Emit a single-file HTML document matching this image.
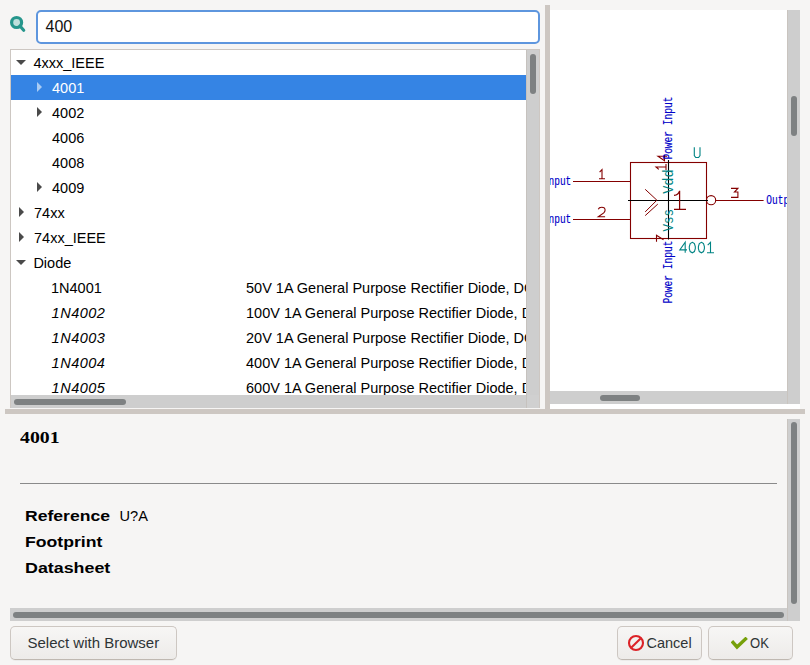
<!DOCTYPE html>
<html><head><meta charset="utf-8">
<style>
*{box-sizing:border-box;margin:0;padding:0}
html,body{width:810px;height:665px;overflow:hidden;background:#f6f5f4;font-family:"Liberation Sans",sans-serif;color:#000}
.a{position:absolute}
#search{left:36px;top:10px;width:504px;height:34px;border:2px solid #5e96de;border-radius:5px;background:#fff}
#search span{position:absolute;left:7.5px;top:6px;font-size:16px;line-height:18px;color:#111}
#tree{left:10px;top:49px;width:530px;height:359px;border:1px solid #cdc7c2;border-bottom:0;background:#fff;overflow:hidden}
.row{position:absolute;left:0;width:515px;height:25px;font-size:14.5px;line-height:25px;white-space:nowrap;letter-spacing:0}
.row.sel{background:#3584e4;color:#fff}
.row span{position:absolute;top:0.8px}
.tri{position:absolute;width:0;height:0}
.down{border-left:5px solid transparent;border-right:5px solid transparent;border-top:5px solid #4a4a4a}
.right{border-top:5px solid transparent;border-bottom:5px solid transparent;border-left:5.5px solid #4a4a4a;margin-top:-0.7px}
.it{font-style:italic;letter-spacing:0.5px}
.trough{background:#cecece}
.thumb{background:#7e8182;border-radius:3px}
.sash{background:#cdc7c2}
.btn{top:626px;height:34px;border:1px solid #cdc7c2;border-bottom-color:#bfb8b1;border-radius:5px;background:linear-gradient(#f7f6f5,#edebe9);font-size:15px;color:#2e3436;box-shadow:0 1px 0 rgba(0,0,0,0.04)}
.btn span{position:absolute;top:7px;line-height:18px}
.lbl{font-weight:bold;font-size:14px;display:inline-block;transform-origin:0 0}
</style></head><body>

<!-- search icon -->
<svg class="a" style="left:6px;top:12px" width="24" height="24" viewBox="0 0 24 24">
  <circle cx="10.6" cy="10.5" r="5" fill="#bfe0dc" stroke="#26968c" stroke-width="3.2"/>
  <line x1="14" y1="14" x2="17.7" y2="18.2" stroke="#26968c" stroke-width="3.2" stroke-linecap="round"/>
</svg>

<div id="search" class="a"><span>400</span></div>

<div id="tree" class="a">
  <div class="row" style="top:0"><div class="tri down" style="left:5.1px;top:10px"></div><span style="left:22.4px">4xxx_IEEE</span></div>
  <div class="row sel" style="top:25px"><div class="tri right" style="left:26px;top:7.5px;border-left-color:#a9cbf3"></div><span style="left:41px">4001</span></div>
  <div class="row" style="top:50px"><div class="tri right" style="left:26px;top:7.5px"></div><span style="left:41px">4002</span></div>
  <div class="row" style="top:75px"><span style="left:41px">4006</span></div>
  <div class="row" style="top:100px"><span style="left:41px">4008</span></div>
  <div class="row" style="top:125px"><div class="tri right" style="left:26px;top:7.5px"></div><span style="left:41px">4009</span></div>
  <div class="row" style="top:150px"><div class="tri right" style="left:8px;top:7.5px"></div><span style="left:23px">74xx</span></div>
  <div class="row" style="top:175px"><div class="tri right" style="left:8px;top:7.5px"></div><span style="left:23px">74xx_IEEE</span></div>
  <div class="row" style="top:200px"><div class="tri down" style="left:5.1px;top:10px"></div><span style="left:22.4px">Diode</span></div>
  <div class="row" style="top:225px"><span style="left:40px">1N4001</span><span style="left:235px">50V 1A General Purpose Rectifier Diode, DO-41</span></div>
  <div class="row" style="top:250px"><span class="it" style="left:40.6px">1N4002</span><span style="left:235px">100V 1A General Purpose Rectifier Diode, DO-41</span></div>
  <div class="row" style="top:275px"><span class="it" style="left:40.6px">1N4003</span><span style="left:235px">20V 1A General Purpose Rectifier Diode, DO-41</span></div>
  <div class="row" style="top:300px"><span class="it" style="left:40.6px">1N4004</span><span style="left:235px">400V 1A General Purpose Rectifier Diode, DO-41</span></div>
  <div class="row" style="top:325px"><span class="it" style="left:40.6px">1N4005</span><span style="left:235px">600V 1A General Purpose Rectifier Diode, DO-41</span></div>
</div>
<!-- tree scrollbars -->
<div class="a trough" style="left:526px;top:50px;width:13px;height:345px;border-left:1px solid #c6c2be"></div>
<div class="a thumb" style="left:530px;top:54px;width:6px;height:40px"></div>
<div class="a trough" style="left:11px;top:395px;width:515px;height:13px"></div>
<div class="a thumb" style="left:14px;top:399px;width:112px;height:6px"></div>
<div class="a" style="left:526px;top:395px;width:13px;height:13px;background:#d0d0d0;border-left:1px solid #c6c2be"></div>

<!-- sashes -->
<div class="a sash" style="left:545px;top:5px;width:5px;height:404px"></div>
<div class="a sash" style="left:5px;top:409px;width:800px;height:5px"></div>

<!-- preview -->
<div class="a" style="left:550px;top:10px;width:250px;height:399px;background:#fff"></div>
<div class="a trough" style="left:787px;top:10px;width:13px;height:394px;border-left:1px solid #c9c4bf"></div>
<div class="a thumb" style="left:791px;top:96px;width:6px;height:40px"></div>
<div class="a trough" style="left:550px;top:391px;width:237px;height:13px"></div>
<div class="a thumb" style="left:600px;top:395px;width:40px;height:6px"></div>

<svg class="a" style="left:550px;top:10px" width="237" height="381" viewBox="550 10 237 381">
  <g fill="none" stroke-linecap="butt">
    <rect x="630.5" y="162.5" width="76" height="76" stroke="#840000" stroke-width="1.1"/>
    <line x1="573" y1="181.5" x2="630.5" y2="181.5" stroke="#840000" stroke-width="1.1"/>
    <line x1="573" y1="219.5" x2="630.5" y2="219.5" stroke="#840000" stroke-width="1.1"/>
    <circle cx="711.1" cy="200.2" r="4.6" stroke="#840000" stroke-width="1.1"/>
    <line x1="715.7" y1="200.5" x2="763.6" y2="200.5" stroke="#840000" stroke-width="1.1"/>
    <line x1="628" y1="200.5" x2="708" y2="200.5" stroke="#000" stroke-width="1.1"/>
    <line x1="668.5" y1="160" x2="668.5" y2="239.5" stroke="#000" stroke-width="1.1"/>
    <polyline points="645.2,189.3 656.9,200.2 645.2,211.9" stroke="#840000" stroke-width="1"/>
    <line x1="657.8" y1="204.1" x2="645.2" y2="215.6" stroke="#840000" stroke-width="1"/>
<path d="M0.1,0.28 L0.5,0 L0.5,1 M0,1 L1,1" transform="translate(599,169.6) scale(6,9.1)" vector-effect="non-scaling-stroke" stroke="#840000" stroke-width="1.1" fill="none"/>
<path d="M0,0.22 Q0.1,0 0.5,0 Q1,0 1,0.3 Q1,0.45 0.8,0.6 L0,1 L1,1" transform="translate(598.3,207.2) scale(6.8,9.5)" vector-effect="non-scaling-stroke" stroke="#840000" stroke-width="1.1" fill="none"/>
<path d="M0,0 L1,0 L0.5,0.4 L1,0.4 L1,1 L0,1" transform="translate(731,188.4) scale(6.9,9)" vector-effect="non-scaling-stroke" stroke="#840000" stroke-width="1.1" fill="none"/>
<path d="M679.6,190.8 Q678.6,194.8 674,195.4 M679.6,190.8 L679.6,209.3 M674,209.3 L686,209.3" stroke="#840000" stroke-width="1.25" fill="none"/>
<path d="M0,0 L0,0.8 L0.25,1 L0.75,1 L1,0.8 L1,0" transform="translate(694.3,147.3) scale(5.7,10.2)" vector-effect="non-scaling-stroke" stroke="#008484" stroke-width="1.1" fill="none"/>
<path d="M0.75,1 L0.75,0 L0,0.72 L1,0.72" transform="translate(679.8,242.3) scale(7.2,10.5)" vector-effect="non-scaling-stroke" stroke="#008484" stroke-width="1.1" fill="none"/>
<path d="M0.5,0 L0.85,0.12 L1,0.4 L1,0.6 L0.85,0.88 L0.5,1 L0.15,0.88 L0,0.6 L0,0.4 L0.15,0.12 Z" transform="translate(689.3,242.3) scale(6,10.5)" vector-effect="non-scaling-stroke" stroke="#008484" stroke-width="1.1" fill="none"/>
<path d="M0.5,0 L0.85,0.12 L1,0.4 L1,0.6 L0.85,0.88 L0.5,1 L0.15,0.88 L0,0.6 L0,0.4 L0.15,0.12 Z" transform="translate(698.4,242.3) scale(6,10.5)" vector-effect="non-scaling-stroke" stroke="#008484" stroke-width="1.1" fill="none"/>
<path d="M0.1,0.28 L0.5,0 L0.5,1 M0,1 L1,1" transform="translate(707,242.3) scale(7,10.5)" vector-effect="non-scaling-stroke" stroke="#008484" stroke-width="1.1" fill="none"/>
<path d="M0.1,0.28 L0.5,0 L0.5,1 M0,1 L1,1" transform="translate(656,170) rotate(-90) scale(6,10)" vector-effect="non-scaling-stroke" stroke="#840000" stroke-width="1.1" fill="none"/>
<path d="M0.75,1 L0.75,0 L0,0.72 L1,0.72" transform="translate(658,160.7) rotate(-90) scale(6,9)" vector-effect="non-scaling-stroke" stroke="#840000" stroke-width="1.1" fill="none"/>
<path d="M0,0 L1,0 L0.3,1" transform="translate(656.5,241.7) rotate(-90) scale(6.5,7)" vector-effect="non-scaling-stroke" stroke="#840000" stroke-width="1.1" fill="none"/>

  </g>
  <g font-family="Liberation Mono" stroke-width="0.15">
    <text x="571.3" y="184.6" font-size="12" fill="#0000c8" stroke="#0000c8" text-anchor="end" textLength="28.5" lengthAdjust="spacingAndGlyphs">Input</text>
    <text x="571.3" y="222.6" font-size="12" fill="#0000c8" stroke="#0000c8" text-anchor="end" textLength="28.5" lengthAdjust="spacingAndGlyphs">Input</text>
    <text x="766.3" y="203.8" font-size="12" fill="#0000c8" stroke="#0000c8" textLength="34.2" lengthAdjust="spacingAndGlyphs">Output</text>
    <text transform="translate(672.2,159.6) rotate(-90)" font-size="12" fill="#0000c8" stroke="#0000c8" textLength="63" lengthAdjust="spacingAndGlyphs">Power Input</text>
    <text transform="translate(672.2,303.6) rotate(-90)" font-size="12" fill="#0000c8" stroke="#0000c8" textLength="63" lengthAdjust="spacingAndGlyphs">Power Input</text>
    <text transform="translate(673,193.8) rotate(-90)" font-size="14" fill="#008484" textLength="24.5" lengthAdjust="spacingAndGlyphs">Vdd</text>
    <text transform="translate(673,231.6) rotate(-90)" font-size="14" fill="#008484" textLength="22.5" lengthAdjust="spacingAndGlyphs">Vss</text>
  </g>
</svg>

<!-- details -->
<div class="a trough" style="left:787px;top:419px;width:13px;height:202px;border-left:1px solid #c9c4bf"></div>
<div class="a thumb" style="left:791px;top:422px;width:6px;height:182px"></div>
<div class="a trough" style="left:10px;top:608px;width:777px;height:13px"></div>
<div class="a thumb" style="left:13px;top:612px;width:771px;height:6px"></div>

<div class="a" style="left:20px;top:429px;line-height:18px"><span class="lbl" style="font-family:'Liberation Serif',serif;font-size:17px;transform:scaleX(1.165)">4001</span></div>
<div class="a" style="left:20px;top:483px;width:757px;height:1px;background:#8a8a8a"></div>
<div class="a" style="left:24.8px;top:507px;line-height:18px"><span class="lbl" style="transform:scaleX(1.255)">Reference</span></div>
<div class="a" style="left:119.5px;top:507px;line-height:18px;font-size:14.6px">U?A</div>
<div class="a" style="left:24.8px;top:533px;line-height:18px"><span class="lbl" style="transform:scaleX(1.26)">Footprint</span></div>
<div class="a" style="left:24.8px;top:559px;line-height:18px"><span class="lbl" style="transform:scaleX(1.275)">Datasheet</span></div>

<!-- buttons -->
<div class="a btn" style="left:10px;width:167px"><span style="left:16.5px">Select with Browser</span></div>
<div class="a btn" style="left:617px;width:85px">
  <svg class="a" style="left:9px;top:7px" width="18" height="18" viewBox="0 0 18 18">
    <circle cx="9" cy="9" r="7" fill="none" stroke="#dc2227" stroke-width="2.1"/>
    <line x1="13.6" y1="4.6" x2="4.4" y2="13.4" stroke="#dc2227" stroke-width="2.1"/>
  </svg>
  <span style="left:28.5px;font-size:14.5px;top:6.8px">Cancel</span></div>
<div class="a btn" style="left:708px;width:85px">
  <svg class="a" style="left:22px;top:10px" width="17" height="14" viewBox="0 0 17 14">
    <polyline points="2,5.5 6,10 14.5,2" fill="none" stroke="#76a00a" stroke-width="3.4" stroke-linecap="square"/>
  </svg>
  <span style="left:41px;font-size:14.5px;top:6.8px;display:inline-block;transform:scaleX(0.9);transform-origin:0 0">OK</span></div>

</body></html>
